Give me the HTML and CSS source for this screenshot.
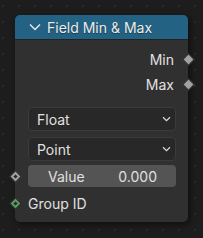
FILE: index.html
```html
<!DOCTYPE html>
<html>
  <head>
    <meta charset="UTF-8" />
    <title>Field Min &amp; Max</title>
    <link rel="stylesheet" href="styles.css">
  </head>
  <body>
    <div class="node">
      <div class="node-header">
        <svg class="collapse" width="12" height="8" viewBox="0 0 12 8">
          <path d="M1 1.5 L6 6.5 L11 1.5" fill="none" stroke="#e8e8e8" stroke-width="1.4" />
        </svg>
        <span class="node-title">Field Min &amp; Max</span>
      </div>

      <div class="node-body">
        <div class="output-row">
          <span class="socket-label">Min</span>
          <span class="socket socket-out"></span>
        </div>
        <div class="output-row">
          <span class="socket-label">Max</span>
          <span class="socket socket-out"></span>
        </div>

        <div class="dropdown dropdown-first">
          <span>Float</span>
          <svg class="drop-arrow" width="9" height="6" viewBox="0 0 9 6">
            <path d="M1 1.2 L4.5 4.6 L8 1.2" fill="none" stroke="#d8d8d8" stroke-width="1.3" />
          </svg>
        </div>
        <div class="dropdown">
          <span>Point</span>
          <svg class="drop-arrow" width="9" height="6" viewBox="0 0 9 6">
            <path d="M1 1.2 L4.5 4.6 L8 1.2" fill="none" stroke="#d8d8d8" stroke-width="1.3" />
          </svg>
        </div>

        <div class="input-row">
          <span class="socket socket-in socket-float"></span>
          <div class="number-field">
            <span>Value</span>
            <span>0.000</span>
          </div>
        </div>
        <div class="input-row input-row-plain">
          <span class="socket socket-in socket-int"></span>
          <span class="socket-label">Group ID</span>
        </div>
      </div>
    </div>
  </body>
</html>
```

FILE: styles.css
```css
html, body {
  margin: 0;
  height: 100%;
}

body {
  width: 203px;
  height: 238px;
  overflow: hidden;
  padding: 15px 0 0 15px;
  box-sizing: border-box;
  background-color: #1d1d1d;
  background-image: radial-gradient(circle, #2b2b2b 0.9px, transparent 1.3px);
  background-size: 16px 16px;
  background-position: -5px -2px;
  font-family: 'Inter', 'DejaVu Sans', sans-serif;
  font-size: 14px;
  color: #e0e0e0;
}

.node {
  width: 173px;
  height: 207px;
  border-radius: 5px;
  background: #303030;
  box-shadow: 2px 2px 6px rgba(0, 0, 0, 0.55);
  display: flex;
  flex-direction: column;
}

.node-header {
  height: 25px;
  background: #246283;
  border-radius: 5px 5px 0 0;
  display: flex;
  align-items: center;
  padding-left: 14px;
  border-bottom: 1px solid #222;
  box-sizing: border-box;
}

.collapse {
  margin-right: 6px;
}

.node-title {
  color: #ececec;
  text-shadow: 0 1px 1px rgba(0, 0, 0, 0.4);
}

.node-body {
  padding-top: 7px;
  display: flex;
  flex-direction: column;
}

.output-row {
  position: relative;
  height: 25px;
  display: flex;
  align-items: center;
  justify-content: flex-end;
  padding-right: 14px;
}

.socket {
  position: absolute;
  top: 50%;
  width: 7px;
  height: 7px;
  margin-top: -4.5px;
  border: 1px solid #1a1a1a;
  background: #a1a1a1;
  transform: rotate(45deg);
}

.socket-out {
  right: -4.5px;
}

.socket-in {
  left: -4.5px;
}

.socket-in:after {
  content: '';
  position: absolute;
  left: 2px;
  top: 2px;
  width: 3px;
  height: 3px;
  background: #2a2a2a;
}

.socket-int {
  background: #5b9a62;
}

.dropdown {
  margin: 6px 12px 0 13px;
  height: 24px;
  box-sizing: border-box;
  border: 1px solid #3b3b3b;
  border-radius: 4px;
  background: #282828;
  display: flex;
  align-items: center;
  justify-content: space-between;
  padding: 0 4px 0 8px;
}

.dropdown-first {
  margin-top: 10px;
}

.input-row {
  position: relative;
  margin-top: 4px;
  padding: 0 12px 0 13px;
}

.number-field {
  height: 22px;
  border-radius: 4px;
  background: #545454;
  display: flex;
  align-items: center;
  justify-content: space-between;
  padding: 0 19px 0 20px;
}

.input-row-plain {
  height: 26px;
  margin-top: 3px;
  display: flex;
  align-items: center;
}
```
